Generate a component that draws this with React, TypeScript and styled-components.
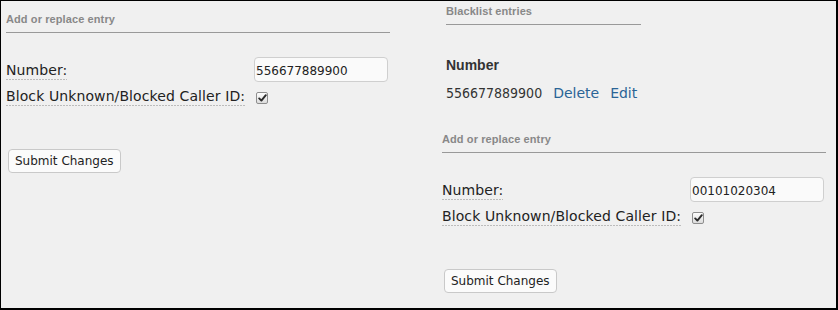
import React from "react";
import styled, { createGlobalStyle } from "styled-components";

const GlobalStyle = createGlobalStyle`
  html, body { margin: 0; padding: 0; background: #f0f0f0; }
  body { font-family: "DejaVu Sans", sans-serif; color: #333; }
`;

const Frame = styled.div`
  box-sizing: border-box;
  width: 838px;
  height: 310px;
  border-style: solid;
  border-color: #000;
  border-width: 1px 2px 2px 1px;
  background: #f0f0f0;
  display: grid;
  grid-template-columns: 436px 1fr;
  overflow: hidden;
`;

const Column = styled.div<{ $top: number }>`
  padding: ${(p) => p.$top}px 0 0 5px;
  display: flex;
  flex-direction: column;
  align-items: flex-start;
`;

const SectionTitle = styled.h3<{ $width: number }>`
  box-sizing: content-box;
  margin: 0;
  width: ${(p) => p.$width}px;
  font: bold 11px/13px "Liberation Sans", Arial, sans-serif;
  letter-spacing: 0.1px;
  color: #888;
  padding-bottom: 6px;
  border-bottom: 1px solid #999;
`;

const Form = styled.form`
  display: flex;
  flex-direction: column;
  align-items: flex-start;
  margin-top: 24px;
`;

const FieldRow = styled.div<{ $gap?: number }>`
  display: grid;
  grid-template-columns: 248px auto;
  align-items: baseline;
  margin-top: ${(p) => p.$gap ?? 0}px;
`;

const Label = styled.label`
  justify-self: start;
  font: 14px/17px "DejaVu Sans", sans-serif;
  letter-spacing: 0.1px;
  color: #222;
  background-image: repeating-linear-gradient(
    to right,
    #bcbcbc 0 2px,
    transparent 2px 3px
  );
  background-size: 100% 1px;
  background-position: left bottom;
  background-repeat: no-repeat;
  padding-bottom: 1px;
`;

const TextInput = styled.input`
  box-sizing: border-box;
  width: 134px;
  height: 25px;
  margin: 0;
  padding: 2px 1px 0;
  border: 1px solid #cfcfcf;
  border-radius: 4px;
  background: #fafafa;
  font: 12px "DejaVu Sans", sans-serif;
  color: #222;
  outline: none;
`;

const CheckBox = styled.span`
  box-sizing: border-box;
  display: inline-flex;
  align-items: center;
  justify-content: center;
  width: 12px;
  height: 12px;
  margin-left: 2px;
  border: 1px solid #8e8e8e;
  border-radius: 2px;
  background: linear-gradient(#fdfdfd, #dcdcdc);
  position: relative;
  top: 1px;
`;

const Button = styled.button`
  box-sizing: border-box;
  height: 24px;
  margin: 43px 0 0 2px;
  padding: 0 6px;
  border: 1px solid #c9c9c9;
  border-radius: 4px;
  background: #fbfbfb;
  font: 12px "DejaVu Sans", sans-serif;
  color: #222;
`;

const EntriesBlock = styled.div`
  margin-left: 4px;
  display: flex;
  flex-direction: column;
  align-items: flex-start;
`;

const EntriesTable = styled.table`
  border-collapse: collapse;
  margin-top: 32px;
`;

const HeadCell = styled.th`
  padding: 0 0 12px 0;
  text-align: left;
  font: bold 14px/16px "Liberation Sans", Arial, sans-serif;
  color: #333;
`;

const Cell = styled.td`
  padding: 0;
  font: 14px/17px "DejaVu Sans", sans-serif;
  color: #333;
`;

const NumberText = styled.span`
  font-stretch: condensed;
  font-family: "DejaVu Sans Condensed", "DejaVu Sans", sans-serif;
`;

const ActionLink = styled.a<{ $gap: number }>`
  margin-left: ${(p) => p.$gap}px;
  color: #2a6496;
  text-decoration: none;
`;

const Spacer = styled.div<{ $h: number }>`
  height: ${(p) => p.$h}px;
`;

function Check() {
  return (
    <CheckBox role="checkbox" aria-checked="true">
      <svg width="9" height="8" viewBox="0 0 9 8">
        <path
          d="M1.2 4.4 L3.4 6.6 L7.8 1.2"
          fill="none"
          stroke="#2b2b2b"
          strokeWidth="1.9"
          strokeLinecap="round"
          strokeLinejoin="round"
        />
      </svg>
    </CheckBox>
  );
}

function EntryForm({ value }: { value: string }) {
  return (
    <>
      <SectionTitle $width={384}>Add or replace entry</SectionTitle>
      <Form onSubmit={(e) => e.preventDefault()}>
        <FieldRow>
          <Label>Number:</Label>
          <TextInput defaultValue={value} />
        </FieldRow>
        <FieldRow $gap={6}>
          <Label>Block Unknown/Blocked Caller ID:</Label>
          <Check />
        </FieldRow>
        <Button type="submit">Submit Changes</Button>
      </Form>
    </>
  );
}

export default function App() {
  return (
    <>
      <GlobalStyle />
      <Frame>
        <Column $top={12}>
          <EntryForm value="556677889900" />
        </Column>
        <Column $top={4}>
          <EntriesBlock>
            <SectionTitle $width={195}>Blacklist entries</SectionTitle>
            <EntriesTable>
              <thead>
                <tr>
                  <HeadCell>Number</HeadCell>
                </tr>
              </thead>
              <tbody>
                <tr>
                  <Cell>
                    <NumberText>556677889900</NumberText>
                    <ActionLink href="#" $gap={11}>Delete</ActionLink>
                    <ActionLink href="#" $gap={11}>Edit</ActionLink>
                  </Cell>
                </tr>
              </tbody>
            </EntriesTable>
          </EntriesBlock>
          <Spacer $h={31} />
          <EntryForm value="00101020304" />
        </Column>
      </Frame>
    </>
  );
}
